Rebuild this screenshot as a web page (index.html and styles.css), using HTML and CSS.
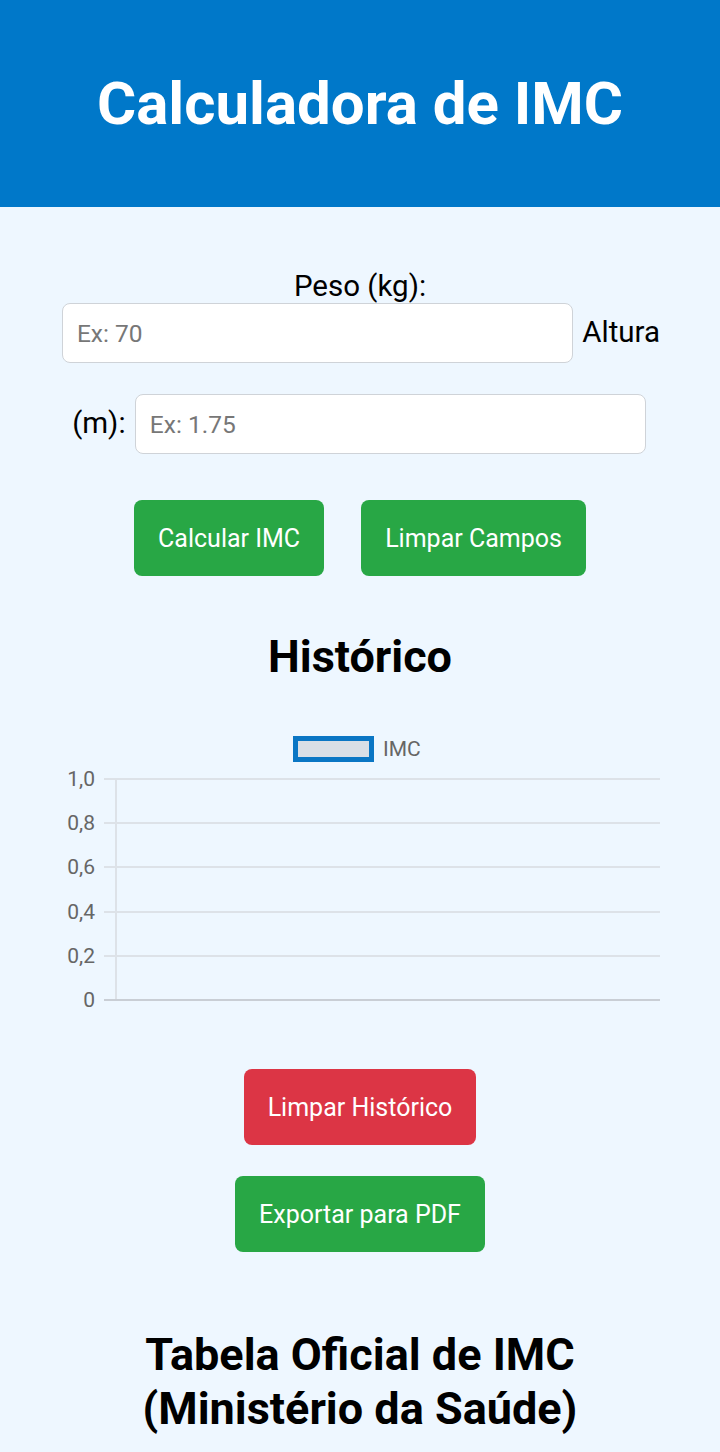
FILE: index.html
```html
<!DOCTYPE html>
<html lang="pt-BR">
<head>
<meta charset="utf-8">
<title>Calculadora de IMC</title>
<link rel="stylesheet" href="styles.css">
</head>
<body>
<header class="topbar">
  <h1 class="title">Calculadora de IMC</h1>
</header>
<main class="container">
  <div class="form">
    <label class="label" for="peso">Peso (kg):</label>
    <input class="field" id="peso" type="number" placeholder="Ex: 70">
    <label class="label" for="altura">Altura (m):</label>
    <input class="field" id="altura" type="number" placeholder="Ex: 1.75">
  </div>
  <div class="actions">
    <button class="btn btn-green">Calcular IMC</button>
    <button class="btn btn-green">Limpar Campos</button>
  </div>
  <h2 class="section-title">Histórico</h2>
  <div class="chart">
    <svg class="chart-svg" width="600" height="290" viewBox="0 0 600 290">
      <rect x="235.5" y="14.5" width="76" height="21" fill="#d9dfe6" stroke="#0a76c4" stroke-width="5"/>
      <text x="323" y="32" class="axis-text">IMC</text>
      <g stroke="#dde2e8" stroke-width="2">
        <line x1="44" y1="55" x2="600" y2="55"/>
        <line x1="44" y1="99" x2="600" y2="99"/>
        <line x1="44" y1="143" x2="600" y2="143"/>
        <line x1="44" y1="188" x2="600" y2="188"/>
        <line x1="44" y1="232" x2="600" y2="232"/>
        <line x1="56" y1="55" x2="56" y2="276"/>
      </g>
      <line x1="44" y1="276" x2="600" y2="276" stroke="#c9ced5" stroke-width="2"/>
      <g class="axis-text" text-anchor="end">
        <text x="35" y="62">1,0</text>
        <text x="35" y="106">0,8</text>
        <text x="35" y="150">0,6</text>
        <text x="35" y="195">0,4</text>
        <text x="35" y="239">0,2</text>
        <text x="35" y="283">0</text>
      </g>
    </svg>
  </div>
  <div class="history-actions">
    <button class="btn btn-red">Limpar Histórico</button>
    <button class="btn btn-green">Exportar para PDF</button>
  </div>
  <h2 class="section-title table-title">Tabela Oficial de IMC<br>(Ministério da Saúde)</h2>
</main>
</body>
</html>
```
FILE: styles.css
```css
html, body {
  margin: 0;
  padding: 0;
}
body {
  background: #eef7ff;
  font-family: Roboto, "Noto Sans", sans-serif;
  color: #000;
  width: 720px;
  height: 1452px;
  overflow: hidden;
}
.topbar {
  background: #0078c9;
  height: 207px;
  display: flex;
  align-items: center;
  justify-content: center;
}
.title {
  margin: 0;
  color: #fff;
  font-size: 60px;
  font-weight: 700;
  line-height: 1;
}
.container {
  width: 600px;
  margin: 0 auto;
  padding-top: 62px;
  text-align: center;
}
.form {
  margin: 0 -6px;
  font-size: 29.5px;
  line-height: normal;
}
.label {
  font-size: 29.5px;
}
.field {
  box-sizing: border-box;
  width: 511px;
  height: 60px;
  margin: 0 2px 31px;
  padding: 0 14px;
  border: 1px solid #cfd3d8;
  border-radius: 8px;
  background: #fff;
  font-family: Roboto, sans-serif;
  font-size: 24.5px;
  color: #333;
  outline: none;
}
.field::placeholder {
  color: #777;
}
.field::-webkit-outer-spin-button,
.field::-webkit-inner-spin-button {
  -webkit-appearance: none;
  margin: 0;
}
.actions {
  display: flex;
  justify-content: center;
  gap: 37px;
  margin-top: 15px;
}
.btn {
  height: 76px;
  padding: 0 24px;
  border: none;
  border-radius: 8px;
  color: #fff;
  font-family: Roboto, sans-serif;
  font-size: 25px;
}
.btn-green {
  background: #28a745;
}
.btn-red {
  background: #dc3545;
}
.section-title {
  margin: 53px 0 0;
  font-size: 45px;
  font-weight: 700;
  line-height: 1.25;
}
.chart {
  margin-top: 39px;
  height: 290px;
}
.chart-svg {
  display: block;
}
.axis-text {
  font-family: Roboto, sans-serif;
  font-size: 21px;
  fill: #666;
}
.history-actions {
  margin-top: 55px;
  display: flex;
  flex-direction: column;
  align-items: center;
  gap: 31px;
}
.table-title {
  margin-top: 76px;
  line-height: 54px;
}
```
